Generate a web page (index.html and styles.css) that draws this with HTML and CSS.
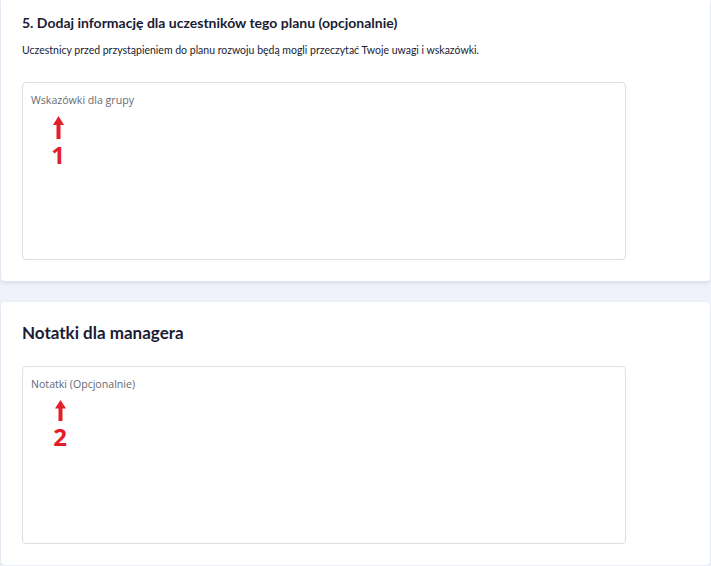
FILE: index.html
```html
<!DOCTYPE html>
<html>
<head>
    <meta charset="UTF-8" />
    <title>Plan rozwoju</title>
    <link rel="stylesheet" href="styles.css">
</head>
<body>
    <div class="karta pierwsza">
        <h2 class="tytul">5. Dodaj informację dla uczestników tego planu (opcjonalnie)</h2>
        <p class="opis">Uczestnicy przed przystąpieniem do planu rozwoju będą mogli przeczytać Twoje uwagi i wskazówki.</p>
        <div class="pole">
            <span class="placeholder">Wskazówki dla grupy</span>
            <div class="znacznik">
                <svg width="11" height="23" viewBox="0 0 11 23"><path d="M5.5 0 L11 9 L7.5 9 L7.5 23 L3.5 23 L3.5 9 L0 9 Z" fill="#e3202a"/></svg>
                <span>1</span>
            </div>
        </div>
    </div>
    <div class="karta druga">
        <h2 class="tytul-duzy">Notatki dla managera</h2>
        <div class="pole">
            <span class="placeholder">Notatki (Opcjonalnie)</span>
            <div class="znacznik">
                <svg width="11" height="21" viewBox="0 0 11 21"><path d="M5.5 0 L11 8.5 L7.5 8.5 L7.5 21 L3.5 21 L3.5 8.5 L0 8.5 Z" fill="#e3202a"/></svg>
                <span>2</span>
            </div>
        </div>
    </div>
</body>
</html>
```

FILE: styles.css
```css
body {
    margin: 0;
    background-color: #eff2fa;
    font-family: Lato, "Open Sans", sans-serif;
    color: #1b1c33;
}

.karta {
    background-color: white;
    margin: 0 1px 0 1px;
    border-radius: 0 0 4px 4px;
    box-shadow: 0 2px 4px rgba(40, 50, 90, 0.12);
    padding: 0 21px;
}

.pierwsza {
    height: 281px;
    box-sizing: border-box;
    padding-top: 14px;
}

.druga {
    margin-top: 21px;
    border-radius: 4px;
    height: 263px;
    box-sizing: border-box;
    padding-top: 21px;
}

.tytul {
    margin: 0;
    font-size: 14px;
    font-weight: 700;
    line-height: 18px;
}

.tytul-duzy {
    margin: 0;
    font-size: 17px;
    font-weight: 700;
    line-height: 20px;
}

.opis {
    margin: 11px 0 0 0;
    font-size: 10.5px;
    line-height: 14px;
}

.pole {
    margin-top: 25px;
    width: 604px;
    height: 178px;
    box-sizing: border-box;
    border: 1px solid #dedede;
    border-radius: 4px;
    padding: 9px 8px;
}

.druga .pole {
    margin-top: 23px;
}

.placeholder {
    display: block;
    font-family: "Open Sans", sans-serif;
    font-size: 10.6px;
    color: #666a70;
    line-height: 16px;
}

.znacznik {
    display: flex;
    flex-direction: column;
    align-items: center;
    width: 20px;
    margin: 8px 0 0 17px;
    gap: 5px;
}

.druga .znacznik {
    margin-left: 19px;
}

.znacznik span {
    font-family: "Open Sans", sans-serif;
    font-weight: 700;
    font-size: 24px;
    line-height: 22px;
    color: #e3202a;
}
```
